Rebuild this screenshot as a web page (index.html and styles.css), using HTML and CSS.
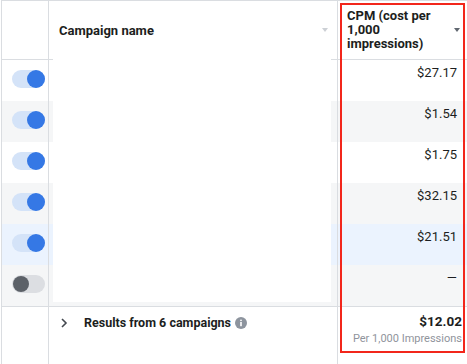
FILE: index.html
```html
<!DOCTYPE html>
<html lang="en">
<head>
    <meta charset="UTF-8">
    <title>Campaigns - CPM</title>
    <link rel="stylesheet" href="styles.css">
</head>
<body>

<div class="page">
    <div class="table">
        <!-- header -->
        <div class="cell head-toggle"></div>
        <div class="cell head-name">
            <span>Campaign name</span>
            <span class="sort light"></span>
        </div>
        <div class="cell head-cpm">
            <span class="head-label">CPM (cost per<br>1,000<br>impressions)</span>
            <span class="sort dark"></span>
        </div>

        <!-- rows -->
        <div class="cell toggle-cell"><span class="toggle on"></span></div>
        <div class="cell name-cell"></div>
        <div class="cell value-cell">$27.17</div>

        <div class="cell toggle-cell grey"><span class="toggle on"></span></div>
        <div class="cell name-cell grey"></div>
        <div class="cell value-cell grey">$1.54</div>

        <div class="cell toggle-cell"><span class="toggle on"></span></div>
        <div class="cell name-cell"></div>
        <div class="cell value-cell">$1.75</div>

        <div class="cell toggle-cell grey"><span class="toggle on"></span></div>
        <div class="cell name-cell grey"></div>
        <div class="cell value-cell grey">$32.15</div>

        <div class="cell toggle-cell blue"><span class="toggle on"></span></div>
        <div class="cell name-cell blue"></div>
        <div class="cell value-cell blue">$21.51</div>

        <div class="cell toggle-cell grey"><span class="toggle off"></span></div>
        <div class="cell name-cell grey"></div>
        <div class="cell value-cell grey">&mdash;</div>

        <!-- footer -->
        <div class="cell foot foot-toggle"></div>
        <div class="cell foot foot-name">
            <svg class="chevron" width="8" height="10" viewBox="0 0 8 10">
                <path d="M2 1 L6 5 L2 9" fill="none" stroke="#444950" stroke-width="1.6"/>
            </svg>
            <span class="foot-label">Results from 6 campaigns</span>
            <svg class="info" width="12" height="12" viewBox="0 0 12 12">
                <circle cx="6" cy="6" r="6" fill="#8d949e"/>
                <rect x="5.2" y="5" width="1.6" height="4.2" fill="#fff"/>
                <circle cx="6" cy="3.3" r="0.9" fill="#fff"/>
            </svg>
        </div>
        <div class="cell foot foot-cpm">
            <div class="total">$12.02</div>
            <div class="total-note">Per 1,000 Impressions</div>
        </div>
    </div>

    <div class="redact"></div>
    <div class="highlight"></div>
</div>

</body>
</html>
```

FILE: styles.css
```css
body {
    margin: 0;
    background: #fff;
    font-family: Roboto, "Liberation Sans", Arial, sans-serif;
    color: #1c1e21;
}
.page {
    position: relative;
    width: 467px;
    height: 364px;
    overflow: hidden;
}
.table {
    display: grid;
    grid-template-columns: 47px 289px 1fr;
    grid-template-rows: 59px repeat(6, 41px) 59px;
    margin-left: 1px;
    border-left: 1px solid #dadde1;
    border-top: 1px solid #dadde1;
}
.cell {
    box-sizing: border-box;
    border-right: 1px solid #dadde1;
}
.cell:nth-child(3n) {
    border-right: none;
}
.grey {
    background: #f5f6f7;
}
.blue {
    background: #ebf3fe;
}

/* header */
.head-toggle, .head-name, .head-cpm {
    border-bottom: 1px solid #dadde1;
}
.head-name, .head-cpm {
    display: flex;
    align-items: center;
    justify-content: space-between;
    font-size: 13px;
    font-weight: bold;
}
.head-name {
    padding: 0 9px 0 10px;
}
.head-cpm {
    padding: 0 7px 1px 9px;
}
.head-label {
    line-height: 14px;
}
.sort {
    width: 0;
    height: 0;
    border-left: 3px solid transparent;
    border-right: 3px solid transparent;
    border-top: 4px solid #ccd0d5;
}
.sort.dark {
    border-top-color: #606770;
}

/* rows */
.toggle-cell {
    display: flex;
    align-items: center;
    padding: 0 0 3px 10px;
}
.toggle {
    position: relative;
    width: 33px;
    height: 18px;
    border-radius: 9px;
}
.toggle::after {
    content: "";
    position: absolute;
    top: 0;
    width: 18px;
    height: 18px;
    border-radius: 50%;
}
.toggle.on {
    background: #d4e3f8;
}
.toggle.on::after {
    right: 0;
    background: #3578e5;
}
.toggle.off {
    background: #dcdee2;
}
.toggle.off::after {
    left: 1px;
    top: 1px;
    width: 16px;
    height: 16px;
    background: #5c6168;
}
.value-cell {
    padding: 5px 10px 0 0;
    text-align: right;
    font-size: 13px;
    line-height: 16px;
}

/* footer */
.foot {
    border-top: 1px solid #dadde1;
}
.foot-name {
    display: flex;
    align-items: flex-start;
    padding: 8px 0 0 11px;
}
.chevron {
    margin-top: 3px;
}
.foot-label {
    margin-left: 16px;
    font-size: 12.5px;
    font-weight: bold;
    line-height: 16px;
}
.info {
    margin: 2px 0 0 4px;
}
.foot-cpm {
    padding: 4px 5px 0 0;
    text-align: right;
}
.total {
    font-size: 13.5px;
    font-weight: bold;
    line-height: 20px;
}
.total-note {
    font-size: 11px;
    color: #90949c;
    line-height: 16px;
}

/* overlays */
.redact {
    position: absolute;
    left: 53px;
    top: 59px;
    width: 278px;
    height: 243px;
    background: #fff;
}
.highlight {
    position: absolute;
    left: 340px;
    top: 3px;
    width: 125px;
    height: 350px;
    box-sizing: border-box;
    border: 2px solid #f2261b;
}
```
